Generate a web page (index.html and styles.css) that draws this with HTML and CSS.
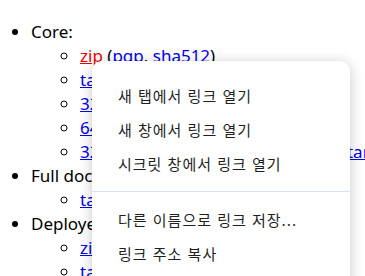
FILE: index.html
```html
<!DOCTYPE html>
<html lang="ko">
<head>
  <meta charset="UTF-8">
  <title>Downloads</title>
  <link rel="stylesheet" href="styles.css">
</head>
<body>
  <ul class="downloads">
    <li>Core:
      <ul>
        <li><a href="#" class="active">zip</a> (<a href="#">pgp</a>, <a href="#">sha512</a>)</li>
        <li><a href="#">tar.gz</a> (<a href="#">pgp</a>, <a href="#">sha512</a>)</li>
        <li><a href="#">32-bit Windows zip</a> (<a href="#">pgp</a>, <a href="#">sha512</a>)</li>
        <li><a href="#">64-bit Windows zip</a> (<a href="#">pgp</a>, <a href="#">sha512</a>)</li>
        <li><a href="#">32-bit Windows zip</a> (<a href="#">pgp</a>, <a href="#">sha512</a>) <a href="#">tar.gz</a></li>
      </ul>
    </li>
    <li>Full documentation:
      <ul>
        <li><a href="#">tar.gz</a> (<a href="#">pgp</a>, <a href="#">sha512</a>)</li>
      </ul>
    </li>
    <li>Deployer:
      <ul>
        <li><a href="#">zip</a> (<a href="#">pgp</a>, <a href="#">sha512</a>)</li>
        <li><a href="#">tar.gz</a> (<a href="#">pgp</a>, <a href="#">sha512</a>)</li>
      </ul>
    </li>
  </ul>

  <div class="context-menu">
    <div class="menu-item">새 탭에서 링크 열기</div>
    <div class="menu-item">새 창에서 링크 열기</div>
    <div class="menu-item">시크릿 창에서 링크 열기</div>
    <div class="menu-sep"></div>
    <div class="menu-item">다른 이름으로 링크 저장...</div>
    <div class="menu-item">링크 주소 복사</div>
    <div class="menu-item">검사</div>
  </div>
</body>
</html>
```
FILE: styles.css
```css
body {
  margin: 0;
  font-family: "Noto Sans", sans-serif;
  font-size: 17px;
  line-height: 24px;
  color: #000;
  overflow: hidden;
}

.downloads {
  margin: 20px 0 0;
  padding-left: 31px;
  list-style: disc;
  white-space: nowrap;
}

.downloads ul {
  margin: 0;
  padding-left: 49px;
  list-style: circle;
}

a {
  color: #0000ee;
}

a.active {
  color: #ee0000;
}

.context-menu {
  position: absolute;
  left: 92px;
  top: 61px;
  width: 258px;
  padding: 18px 0 8px;
  background: #fff;
  border-radius: 10px;
  box-shadow: 0 2px 14px rgba(0,0,0,0.22);
  font-family: "Noto Sans CJK KR", sans-serif;
  font-size: 15px;
  letter-spacing: 1px;
  color: #1f1f1f;
}

.menu-item {
  height: 34px;
  line-height: 34px;
  padding-left: 26px;
  white-space: nowrap;
}

.menu-sep {
  height: 1px;
  margin: 10px 0 11px;
  background: #d3e3fd;
}
```
